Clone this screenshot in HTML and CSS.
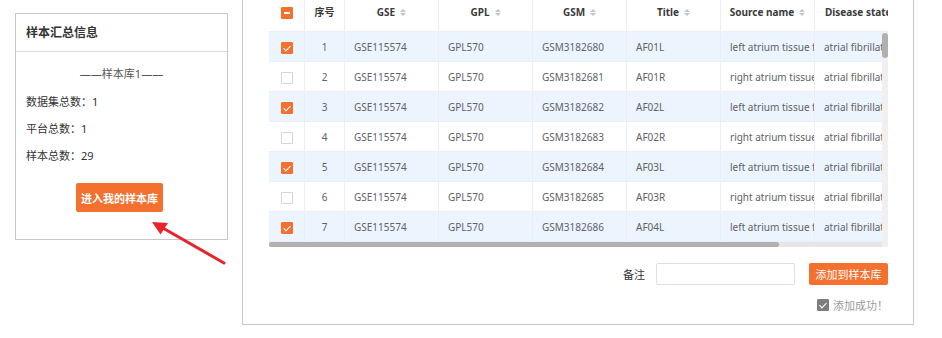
FILE: index.html
```html
<!DOCTYPE html>
<html>

<head>
    <meta charset="utf-8">
    <link rel="stylesheet" href="styles.css">
</head>

<body>
    <div class="page">
        <div class="side">
            <div class="card">
                <div class="card-title">样本汇总信息</div>
                <div class="card-body">
                    <div class="lib-name">——样本库1——</div>
                    <div class="stat">数据集总数：1</div>
                    <div class="stat">平台总数：1</div>
                    <div class="stat">样本总数：29</div>
                    <div class="btn-line">
                        <button class="btn btn-bold">进入我的样本库</button>
                    </div>
                </div>
            </div>

            <svg class="arrow" width="90" height="55" viewBox="0 0 90 55">
                <line x1="22" y1="12.5" x2="84" y2="48" stroke="#e8232b" stroke-width="3" stroke-linecap="round"/>
                <polygon points="12,7 20.5,19.5 28,8" fill="#e8232b"/>
            </svg>
        </div>

        <div class="panel">
            <div class="grid">
                <div class="grid-head">
                    <table class="tbl">
                        <colgroup>
                            <col class="c-check"><col class="c-no"><col class="c-data"><col class="c-data">
                            <col class="c-data"><col class="c-data"><col class="c-data"><col class="c-last">
                        </colgroup>
                        <tr>
                            <th><span class="box box-part"></span></th>
                            <th>序号</th>
                            <th>GSE<span class="sort"></span></th>
                            <th>GPL<span class="sort"></span></th>
                            <th>GSM<span class="sort"></span></th>
                            <th>Title<span class="sort"></span></th>
                            <th>Source name<span class="sort"></span></th>
                            <th class="left">Disease state<span class="sort"></span></th>
                        </tr>
                    </table>
                </div>

                <div class="grid-main">
                    <div class="grid-left">
                        <div class="grid-body">
                            <table class="tbl">
                                <colgroup>
                                    <col class="c-check"><col class="c-no"><col class="c-data"><col class="c-data">
                                    <col class="c-data"><col class="c-data"><col class="c-data"><col class="c-last">
                                </colgroup>
                                <tbody id="rows"></tbody>
                            </table>
                        </div>
                        <div class="hbar"><div class="hthumb"></div></div>
                    </div>
                    <div class="vbar"><div class="vthumb"></div></div>
                </div>
            </div>

            <div class="form-line">
                <span class="label">备注</span>
                <input class="note" type="text">
                <button class="btn btn-add">添加到样本库</button>
            </div>
            <div class="done-line">
                <span class="box box-gray"></span>
                <span class="done-text">添加成功！</span>
            </div>
        </div>
    </div>

    <script>
        const samples = [
            ['GSM3182680', 'AF01L', 'left'],
            ['GSM3182681', 'AF01R', 'right'],
            ['GSM3182682', 'AF02L', 'left'],
            ['GSM3182683', 'AF02R', 'right'],
            ['GSM3182684', 'AF03L', 'left'],
            ['GSM3182685', 'AF03R', 'right'],
            ['GSM3182686', 'AF04L', 'left']
        ];

        const rows = document.getElementById('rows');

        samples.forEach((s, i) => {
            const checked = i % 2 === 0;
            const tr = document.createElement('tr');
            if (checked) tr.className = 'picked';
            tr.innerHTML =
                '<td class="center"><span class="box' + (checked ? ' box-on' : '') + '"></span></td>' +
                '<td class="center">' + (i + 1) + '</td>' +
                '<td>GSE115574</td>' +
                '<td>GPL570</td>' +
                '<td>' + s[0] + '</td>' +
                '<td>' + s[1] + '</td>' +
                '<td>' + s[2] + ' atrium tissue from patient</td>' +
                '<td>atrial fibrillation</td>';
            rows.appendChild(tr);
        });
    </script>
</body>

</html>
```

FILE: styles.css
```css
body {
    margin: 0;
    font-family: "Noto Sans", "Noto Sans CJK SC", sans-serif;
    color: #333;
    background: #fff;
}

.page {
    display: flex;
    align-items: flex-start;
    gap: 14px;
    padding-left: 15px;
}

.side {
    position: relative;
    width: 213px;
    padding-top: 13px;
}

.card {
    border: 1px solid #c8c8c8;
}

.card-title {
    height: 37px;
    line-height: 37px;
    padding-left: 10px;
    font-size: 12px;
    font-weight: bold;
    border-bottom: 1px solid #ddd;
}

.card-body {
    padding: 12px 10px 27px;
    font-size: 11px;
}

.lib-name {
    line-height: 20px;
    text-align: center;
    color: #555;
}

.stat {
    line-height: 27px;
}

.lib-name + .stat {
    margin-top: 4px;
}

.btn-line {
    margin-top: 14px;
    padding-left: 50px;
}

.btn {
    border: 0;
    border-radius: 2px;
    background: #f4702f;
    color: #fff;
    font-family: inherit;
    padding: 0;
    cursor: pointer;
}

.btn-bold {
    width: 87px;
    height: 29px;
    font-size: 11px;
    font-weight: bold;
}

.arrow {
    position: absolute;
    left: 125px;
    top: 215px;
}

.panel {
    width: 619px;
    border: 1px solid #c8c8c8;
    border-top: 0;
    padding: 0 25px 11px 26px;
}

.grid {
    width: 619px;
}

.grid-head {
    overflow: hidden;
    border-bottom: 1px solid #ebeef5;
}

.tbl {
    table-layout: fixed;
    width: 666px;
    border-collapse: separate;
    border-spacing: 0;
    font-size: 10px;
    color: #606266;
}

.c-check { width: 36px; }
.c-no { width: 40px; }
.c-data { width: 94px; }
.c-last { width: 120px; }

.tbl th {
    height: 31px;
    box-sizing: border-box;
    padding: 0 0 8px;
    text-align: center;
    font-weight: bold;
    color: #3a3a3a;
    border-right: 1px solid #ebeef5;
    white-space: nowrap;
    overflow: hidden;
}

.tbl th.left {
    text-align: left;
    padding-left: 10px;
}

.tbl td {
    height: 30px;
    box-sizing: border-box;
    padding: 0 0 0 9px;
    border-right: 1px solid #ebeef5;
    border-bottom: 1px solid #ebeef5;
    white-space: nowrap;
    overflow: hidden;
}

.tbl td.center {
    text-align: center;
    padding: 0;
}

.tbl tr.picked td {
    background: #ecf4fe;
}

.sort {
    display: inline-block;
    vertical-align: middle;
    width: 0;
    height: 0;
    margin-left: 5px;
    border: 3px solid transparent;
    border-bottom-color: #c0c4cc;
    position: relative;
    top: -4px;
}

.sort::after {
    content: "";
    position: absolute;
    left: -3px;
    top: 4px;
    border: 3px solid transparent;
    border-top-color: #c0c4cc;
}

.box {
    display: inline-block;
    vertical-align: middle;
    width: 12px;
    height: 12px;
    box-sizing: border-box;
    border: 1px solid #d2d4d9;
    border-radius: 1px;
    background: #fff;
    position: relative;
}

.box-on,
.box-part {
    border-color: #f4702f;
    background: #f4702f;
}

.box-on::after,
.box-gray::after {
    content: "";
    position: absolute;
    left: 3px;
    top: 1px;
    width: 3px;
    height: 6px;
    border: solid #fff;
    border-width: 0 1px 1px 0;
    transform: rotate(45deg);
}

.box-part::after {
    content: "";
    position: absolute;
    left: 2px;
    top: 4px;
    width: 6px;
    height: 2px;
    background: #fff;
}

.grid-main {
    display: flex;
}

.grid-left {
    width: 613px;
}

.grid-body {
    overflow: hidden;
    height: 210px;
}

.hbar {
    height: 5px;
    background: #e6e6e6;
}

.hthumb {
    width: 510px;
    height: 5px;
    border-radius: 3px;
    background: #b0b0b0;
}

.vbar {
    width: 6px;
    background: #f0f0f0;
}

.vthumb {
    height: 25px;
    margin-top: 1px;
    border-radius: 3px;
    background: #b0b0b0;
}

.form-line {
    display: flex;
    justify-content: flex-end;
    align-items: center;
    margin-top: 16px;
    font-size: 11px;
}

.label {
    color: #333;
    margin-right: 11px;
}

.note {
    width: 139px;
    height: 22px;
    box-sizing: border-box;
    border: 1px solid #dcdfe6;
    border-radius: 2px;
    margin: 0 14px 0 0;
}

.btn-add {
    width: 79px;
    height: 22px;
    font-size: 11px;
}

.done-line {
    display: flex;
    justify-content: flex-end;
    align-items: center;
    margin-top: 12px;
    font-size: 11px;
    color: #999;
}

.box-gray {
    border-color: #7d7d7d;
    background: #7d7d7d;
    margin-right: 4px;
}
```
